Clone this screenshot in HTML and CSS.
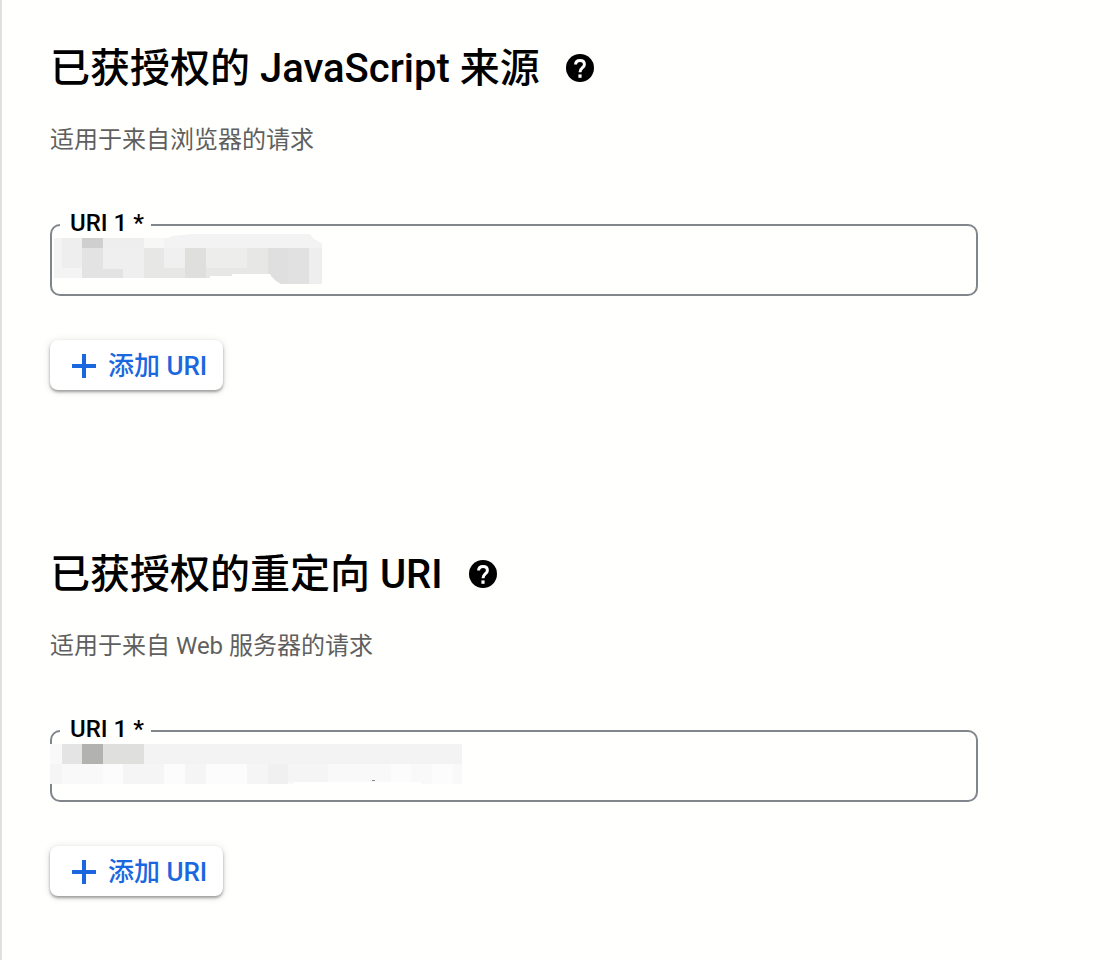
FILE: index.html
```html
<!DOCTYPE html>
<html lang="zh-CN">
<head>
<meta charset="utf-8">
<meta name="viewport" content="width=device-width, initial-scale=1">
<title>已获授权的 URI</title>
<link rel="stylesheet" href="styles.css">
</head>
<body>
<main class="panel">
  <section class="group">
    <div class="heading">
      <h2 class="title">已获授权的 JavaScript 来源</h2>
      <button class="help" type="button" aria-label="帮助">
        <svg class="help-icon" viewBox="0 0 28 28" aria-hidden="true"><circle cx="14" cy="14" r="14" fill="currentColor"/><path d="M9.600 10.600C9.600 8 11.400 6.500 14 6.500s4.400 1.500 4.400 3.900c0 3.200-4.400 3.400-4.400 7.800" fill="none" stroke="#fff" stroke-width="3"/><path fill="#fff" d="M12.400 20.400h3.200v3.400h-3.200z"/></svg>
      </button>
    </div>
    <p class="desc">适用于来自浏览器的请求</p>
    <div class="field">
      <input class="input" id="origin-1" type="text" required>
      <label class="label" for="origin-1">URI 1 *</label>
      <svg class="mask" width="280" height="72" viewBox="50 224 280 72" shape-rendering="crispEdges" aria-hidden="true">
        <clipPath id="mask-shape"><path d="M54 238H168L172 236L192 234H310L314 239L318 241L322 244V284H281L276 281L272 277L270 274H232V276H210V278H54Z"/></clipPath>
        <g clip-path="url(#mask-shape)">
          <path fill="#f3f3f4" d="M54 234h268v50H54z"/>
          <path fill="#f4f4f4" d="M54 238h8v40h-8zM62 268h20v10H62z"/>
          <path fill="#eeeeee" d="M62 238h20v30H62zM103 238h41v10h-41z"/>
          <path fill="#cfcfcf" d="M82 238h21v10H82z"/>
          <path fill="#e3e3e3" d="M82 248h21v30H82zM103 269h20v9h-20z"/>
          <path fill="#efefef" d="M103 248h41v21h-41zM123 268h21v10h-21z"/>
          <path fill="#f7f7f6" d="M144 238h20v10h-20z"/>
          <path fill="#f0f0f0" d="M164 248h21v20h-21z"/>
          <path fill="#e7e7e6" d="M144 248h20v30h-20zM164 268h21v10h-21zM206 268h62v10h-62z"/>
          <path fill="#dfdfde" d="M185 248h21v30h-21z"/>
          <path fill="#ededec" d="M206 248h41v20h-41z"/>
          <path fill="#e7e7e5" d="M247 248h21v30h-21z"/>
          <path fill="#dfdfdf" d="M268 248h20v36h-20z"/>
          <path fill="#e1e1e1" d="M288 248h21v36h-21z"/>
          <path fill="#eeeeef" d="M309 248h13v36h-13z"/>
        </g>
      </svg>
    </div>
    <button class="add" type="button">
      <svg class="add-icon" viewBox="0 0 24 24" aria-hidden="true"><path fill="currentColor" d="M10 0h4v10h10v4H14v10h-4V14H0v-4h10z"/></svg>
      <span>添加 URI</span>
    </button>
  </section>

  <section class="group">
    <div class="heading">
      <h2 class="title">已获授权的重定向 URI</h2>
      <button class="help" type="button" aria-label="帮助">
        <svg class="help-icon" viewBox="0 0 28 28" aria-hidden="true"><circle cx="14" cy="14" r="14" fill="currentColor"/><path d="M9.600 10.600C9.600 8 11.400 6.500 14 6.500s4.400 1.500 4.400 3.900c0 3.200-4.400 3.400-4.400 7.800" fill="none" stroke="#fff" stroke-width="3"/><path fill="#fff" d="M12.400 20.400h3.200v3.400h-3.200z"/></svg>
      </button>
    </div>
    <p class="desc">适用于来自 Web 服务器的请求</p>
    <div class="field">
      <input class="input" id="redirect-1" type="text" required>
      <label class="label" for="redirect-1">URI 1 *</label>
      <svg class="mask" width="420" height="72" viewBox="50 730 420 72" shape-rendering="crispEdges" aria-hidden="true">
        <path fill="#f9f9f9" d="M50 744h412v40H421v-2H294v2H50z"/>
        <path fill="#f3f3f3" d="M144 744h318v20H144z"/>
        <path fill="#e4e4e4" d="M62 744h20v20H62z"/>
        <path fill="#b2b2b1" d="M82 744h21v20H82z"/>
        <path fill="#dfdfde" d="M103 744h41v20h-41z"/>
        <path fill="#f5f5f5" d="M50 764h12v20H50zM123 764h41v20h-41zM185 764h21v20h-21zM247 764h21v20h-21zM288 764h40v18h-40z"/>
        <path fill="#f0f0f0" d="M268 764h20v20h-20z"/>
        <path fill="#fcfcfc" d="M103 764h20v20h-20zM164 764h21v20h-21zM206 764h41v20h-41zM391 764h20v18h-20zM432 764h21v20h-21z"/>
        <path fill="#8a8a8a" d="M372 780h3v1h-3z"/>
      </svg>
    </div>
    <button class="add" type="button">
      <svg class="add-icon" viewBox="0 0 24 24" aria-hidden="true"><path fill="currentColor" d="M10 0h4v10h10v4H14v10h-4V14H0v-4h10z"/></svg>
      <span>添加 URI</span>
    </button>
  </section>
</main>
</body>
</html>
```
FILE: styles.css
```css
* {
  box-sizing: border-box;
}

body {
  margin: 0;
  background: #fffffd;
  color: #000;
  font-family: Roboto, "Noto Sans CJK SC", sans-serif;
}

.panel {
  display: flex;
  flex-direction: column;
  gap: 160px;
  min-height: 100vh;
  padding: 44px 48px 64px;
  border-left: 2px solid #e0e0e0;
}

.group {
  display: flex;
  flex-direction: column;
  align-items: flex-start;
  max-width: 928px;
}

.heading {
  display: flex;
  align-items: center;
  gap: 26px;
}

.title {
  margin: 0;
  padding-top: 2px;
  font-size: 40px;
  font-weight: 500;
  line-height: 46px;
}

.help {
  display: flex;
  padding: 0;
  border: 0;
  background: none;
  color: #000;
}

.help-icon {
  width: 28px;
  height: 28px;
}

.desc {
  margin: 32px 0 68px;
  color: #5f5f5f;
  font-size: 24px;
  line-height: 32px;
}

.field {
  position: relative;
  width: 100%;
}

.input {
  display: block;
  width: 100%;
  height: 72px;
  padding: 0 20px;
  border: 2px solid #80868b;
  border-radius: 10px;
  background: transparent;
  font: inherit;
  font-size: 24px;
}

.label {
  position: absolute;
  top: -15px;
  left: 10px;
  padding: 0 7px 0 10px;
  background: #fffffd;
  font-size: 24px;
  font-weight: 500;
  line-height: 28px;
}

.mask {
  position: absolute;
  top: 0;
  left: 0;
  pointer-events: none;
}

.add {
  display: flex;
  align-items: center;
  gap: 12px;
  height: 50px;
  margin-top: 44px;
  padding: 2px 16px 0 22px;
  border: 0;
  border-radius: 8px;
  background: #fff;
  box-shadow: 0 2px 3px rgba(0, 0, 0, 0.35), 0 1px 8px rgba(0, 0, 0, 0.12);
  color: #1a67df;
  font: inherit;
  font-size: 26px;
  font-weight: 500;
  line-height: 32px;
}

.add-icon {
  width: 24px;
  height: 24px;
}
```
